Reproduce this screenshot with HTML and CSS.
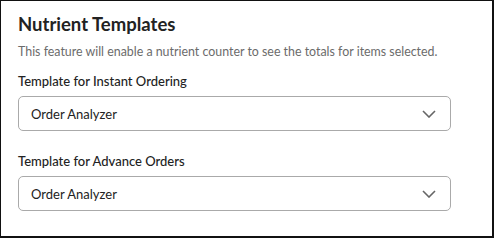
FILE: index.html
```html
<!DOCTYPE html>
<html>
<head>
<meta charset="utf-8">
<link rel="stylesheet" href="styles.css">
</head>
<body>
<div class="card">
  <h1 class="title">Nutrient Templates</h1>
  <p class="desc">This feature will enable a nutrient counter to see the totals for items selected.</p>
  <div class="field">
    <label class="label">Template for Instant Ordering</label>
    <div class="select">
      <span class="value">Order Analyzer</span>
      <svg class="chev" width="14" height="8" viewBox="0 0 14 8"><path d="M1 1 L7 7 L13 1" fill="none" stroke="#666" stroke-width="1.6"/></svg>
    </div>
  </div>
  <div class="field">
    <label class="label">Template for Advance Orders</label>
    <div class="select">
      <span class="value">Order Analyzer</span>
      <svg class="chev" width="14" height="8" viewBox="0 0 14 8"><path d="M1 1 L7 7 L13 1" fill="none" stroke="#666" stroke-width="1.6"/></svg>
    </div>
  </div>
</div>
</body>
</html>
```
FILE: styles.css
```css
html, body { margin: 0; padding: 0; background: #fff; }
body { font-family: Lato, "Open Sans", sans-serif; }
.card {
  box-sizing: border-box;
  width: 494px;
  height: 238px;
  border-top: 1px solid #111;
  border-left: 1px solid #111;
  border-right: 2px solid #111;
  border-bottom: 2px solid #111;
  padding: 11px 0 0 17px;
}
.title {
  margin: 0;
  font-size: 18.5px;
  font-weight: 700;
  color: #222;
  line-height: 24px;
}
.desc {
  margin: 7px 0 0;
  font-size: 12.4px;
  color: #6b6b6b;
  line-height: 18px;
}
.field { margin-top: 11px; }
.field + .field { margin-top: 21px; }
.label {
  display: block;
  font-size: 13px;
  font-weight: 500;
  color: #222;
  line-height: 18px;
  margin-bottom: 6px;
}
.select {
  box-sizing: border-box;
  width: 433px;
  height: 35px;
  border: 1px solid #aaa;
  border-radius: 5px;
  display: flex;
  align-items: center;
  justify-content: space-between;
  padding: 0 14px 0 12px;
}
.value { font-size: 13px; color: #222; }
.chev { display: block; }
```
